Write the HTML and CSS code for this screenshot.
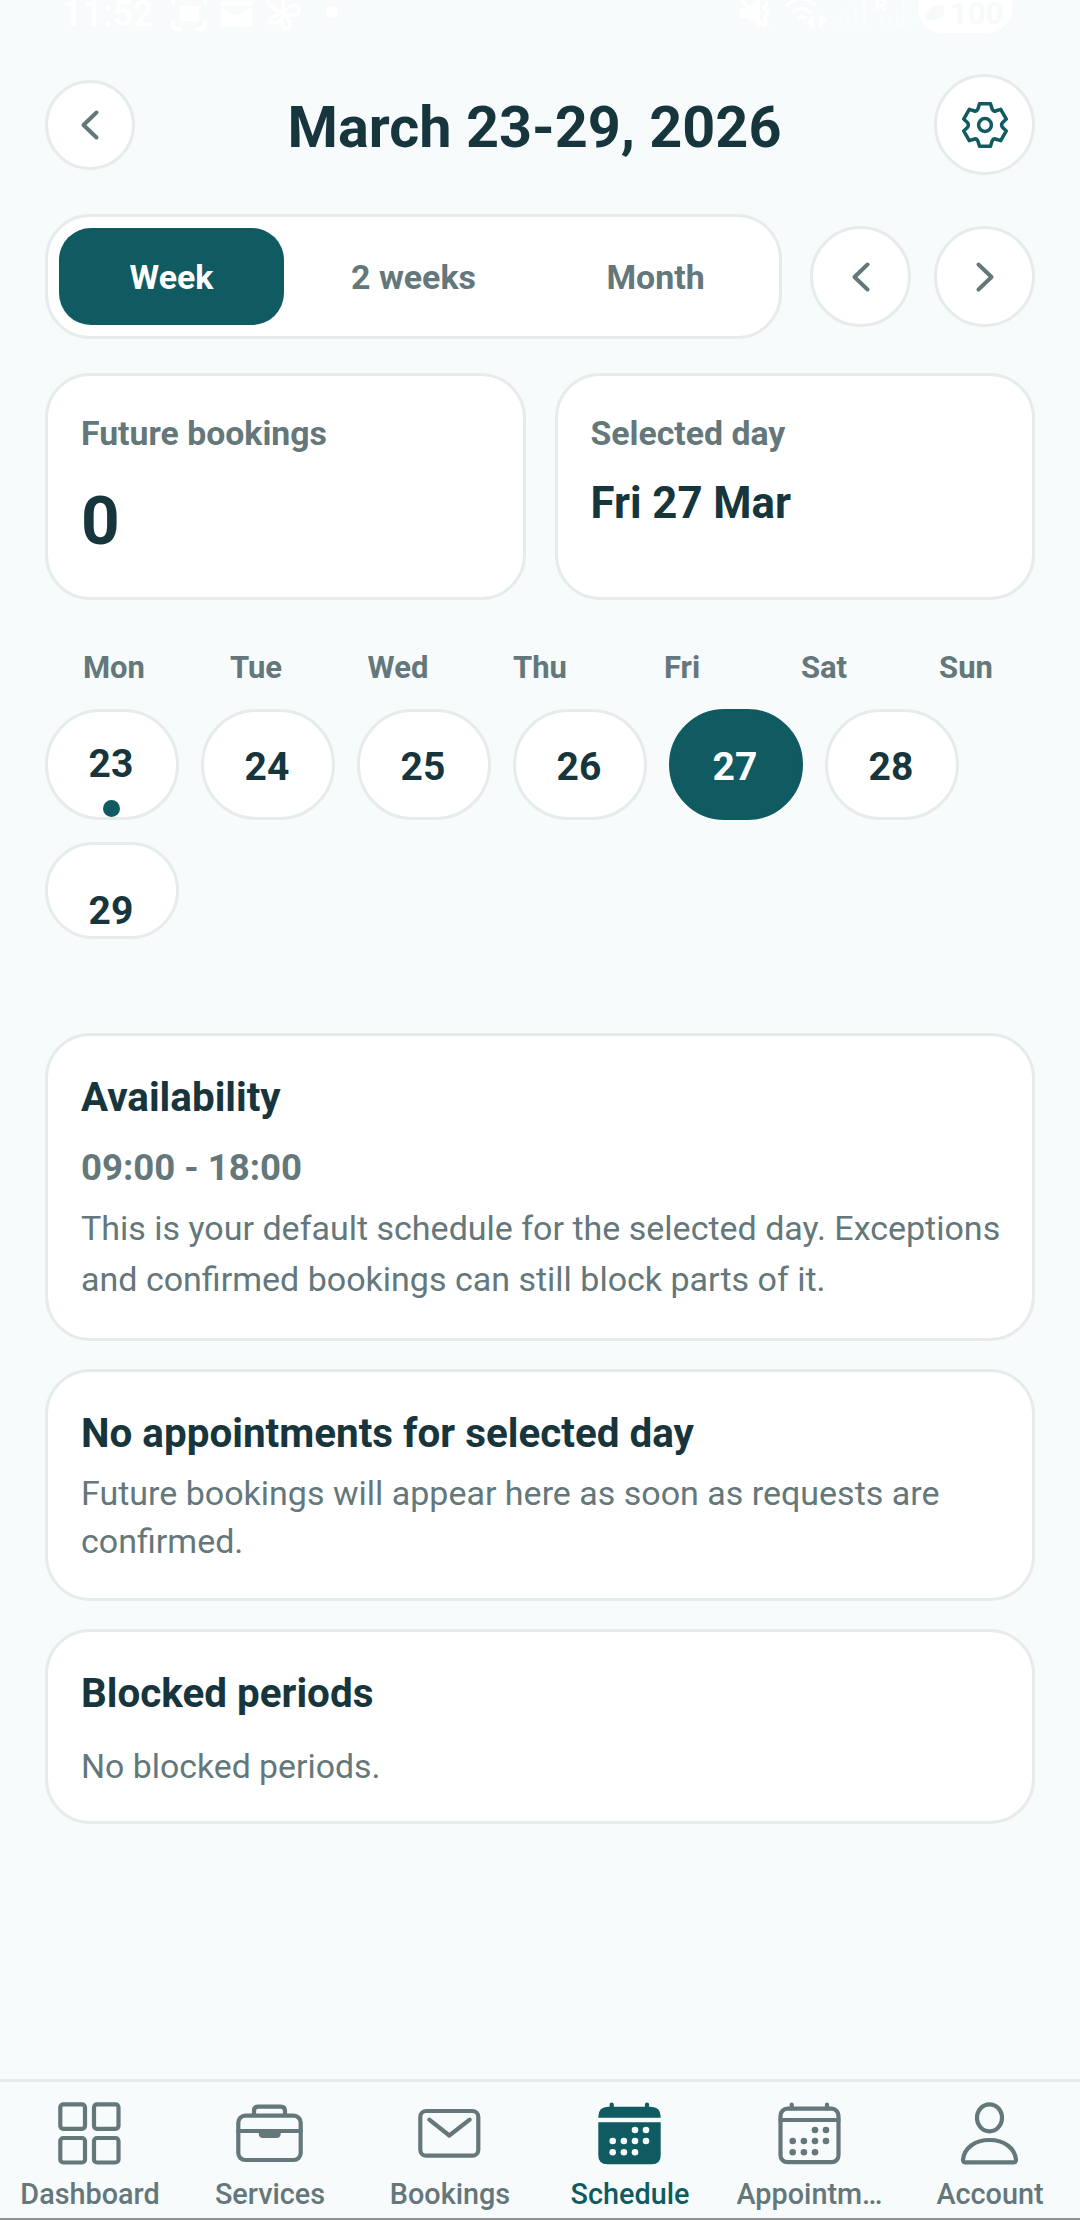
FILE: index.html
```html
<!DOCTYPE html>
<html lang="en">
<head>
    <meta charset="UTF-8">
    <meta name="viewport" content="width=device-width, initial-scale=1.0">
    <title>Schedule</title>
    <link rel="stylesheet" href="styles.css">
</head>
<body>
    <div class="status-bar">
        <span class="status-time">11:52</span>
        <svg class="status-left" width="170" height="34" viewBox="170 0 170 34">
            <g fill="none" stroke="#fff" stroke-width="4" stroke-linecap="round">
                <path d="M173 22v3q0 4 4 4h3M198 29h3q4 0 4-4v-3M173 3V0M205 3V0"/>
            </g>
            <path d="M283 13C270 8 266 3 268-4M283 13C270 16 266 24 272 23C278 24 283 20 283 13C280 24 282 30 288 29C292 26 290 19 283 13C292 18 300 15 299 9C296 3 288 6 283 13V-4" fill="none" stroke="#fff" stroke-width="3"/>
            <path d="M180 6h19v15h-19z" fill="#fff"/>
            <path d="M220 0h33v23q0 4-4 4h-25q-4 0-4-4zM220 6l16 9 17-9" fill="#fff" stroke="#f7fbfc" stroke-width="1.5"/>
            <circle cx="332" cy="12" r="6" fill="#fff"/>
        </svg>
        <svg class="status-right" width="175" height="34" viewBox="738 0 175 34">
            <path d="M740 8h7l13-12v31l-13-9h-7z" fill="#fff"/>
            <g fill="none" stroke="#fff" stroke-width="3" stroke-linecap="round">
                <path d="M740-2l24 28M767 3l-3 5 4 5-4 6 4 6"/>
                <path d="M787 5q15-12 28 0M793 12q9-7 17 0M799 18q3-3 6 0"/>
                <path d="M812 17v9l-3-3M821 26v-9l4 4"/>
            </g>
            <path d="M838 20h4v7h-4zM846 13h4v14h-4zM854 6h4v21h-4zM862 0h4v27h-4z" fill="#fafdfd"/>
            <path d="M880 20h3v7h-3zM888 17h3v10h-3zM896 9h3v18h-3zM902 0h3v27h-3z" fill="#fafdfd"/>
            <path d="M877 10V0h7q3 3-1 5h-5l7 5" fill="none" stroke="#fff" stroke-width="2.5"/>
        </svg>
        <div class="battery">
            <svg width="24" height="22" viewBox="0 0 24 22"><path d="M3 18Q4 3 21 3q2 16-13 14zM3 18L14 9" fill="#f7fafb" stroke="#f7fafb"/></svg>
            100
        </div>
    </div>

    <div class="container">
        <div class="header">
            <button class="circle-button back">
                <svg class="chevron" viewBox="0 0 30 34"><path d="M21.5 4.5L8.5 17l13 12.5"/></svg>
            </button>
            <h1>March 23-29, 2026</h1>
            <button class="circle-button">
                <svg class="gear" viewBox="-24 -24 48 48">
                    <path d="M-5.5-21.3H5.500L7-16.2Q8.400-13.300 10.500-14L15.700-15.600 21.300-5.900 17.400-2.200Q15.800 0 17.400 2.200L21.300 5.900 15.700 15.600 10.500 14Q8.400 13.300 7 16.200L5.500 21.300H-5.500L-7 16.200Q-8.400 13.300-10.500 14L-15.700 15.600-21.300 5.900-17.400 2.200Q-15.800 0-17.400-2.200L-21.300-5.900-15.700-15.600-10.500-14Q-8.400-13.300-7-16.200Z"/>
                    <circle r="6.4"/>
                </svg>
            </button>
        </div>

        <div class="controls">
            <div class="segments">
                <div class="segment active">Week</div>
                <div class="segment">2 weeks</div>
                <div class="segment">Month</div>
            </div>
            <div class="arrows">
                <button class="circle-button">
                    <svg class="chevron" viewBox="0 0 30 34"><path d="M21.5 4.5L8.5 17l13 12.5"/></svg>
                </button>
                <button class="circle-button">
                    <svg class="chevron" viewBox="0 0 30 34"><path d="M8.5 4.5l13 12.5-13 12.5"/></svg>
                </button>
            </div>
        </div>

        <div class="stats">
            <div class="stat-card">
                <div class="stat-label">Future bookings</div>
                <div class="stat-number">0</div>
            </div>
            <div class="stat-card">
                <div class="stat-label">Selected day</div>
                <div class="stat-date">Fri 27 Mar</div>
            </div>
        </div>

        <div class="weekdays">
            <span>Mon</span>
            <span>Tue</span>
            <span>Wed</span>
            <span>Thu</span>
            <span>Fri</span>
            <span>Sat</span>
            <span>Sun</span>
        </div>
        <div class="days">
            <div class="day has-booking">23<span class="dot"></span></div>
            <div class="day">24</div>
            <div class="day">25</div>
            <div class="day">26</div>
            <div class="day selected">27</div>
            <div class="day">28</div>
            <div class="day last">29</div>
        </div>

        <div class="card availability">
            <h2>Availability</h2>
            <p class="hours">09:00 - 18:00</p>
            <p>This is your default schedule for the selected day. Exceptions and confirmed bookings can still block parts of it.</p>
        </div>
        <div class="card appointments">
            <h2>No appointments for selected day</h2>
            <p>Future bookings will appear here as soon as requests are confirmed.</p>
        </div>
        <div class="card blocked">
            <h2>Blocked periods</h2>
            <p>No blocked periods.</p>
        </div>
    </div>

    <div class="tab-bar">
        <div class="tab">
            <svg viewBox="0 0 72 72">
                <rect x="6.3" y="6.3" width="24.7" height="24.5" rx="3"/>
                <rect x="40" y="6.3" width="24.5" height="24.5" rx="3"/>
                <rect x="6.3" y="40" width="24.7" height="24.5" rx="3"/>
                <rect x="40" y="40" width="24.5" height="24.5" rx="3"/>
            </svg>
            <span>Dashboard</span>
        </div>
        <div class="tab">
            <svg viewBox="0 0 72 72">
                <rect x="4.3" y="17.7" width="62.4" height="44.3" rx="7"/>
                <path d="M20 17v-4q0-4.3 4.3-4.3h22.4q4.3 0 4.3 4.3v4M4.3 33h62.4"/>
                <path class="fill" d="M24.7 33h22v2.5q0 4.5-4.5 4.5h-13q-4.500 0-4.500-4.500z"/>
            </svg>
            <span>Services</span>
        </div>
        <div class="tab">
            <svg viewBox="0 0 72 72">
                <rect x="6.3" y="13" width="58" height="44.7" rx="6"/>
                <path d="M15.3 21.7l20 15.8 20.4-15.8"/>
            </svg>
            <span>Bookings</span>
        </div>
        <div class="tab active">
            <svg viewBox="0 0 72 72">
                <path class="fill" d="M4.3 19.7v-1q0-10 10-10h42.4q10 0 10 10v1zM4.3 24.3h62.4v33q0 9-9 9H13.3q-9 0-9-9z"/>
                <path d="M17.7 6.5v5M53 6.5v5"/>
                <g class="holes">
                    <circle cx="41" cy="32" r="3.3"/><circle cx="52" cy="32" r="3.3"/>
                    <circle cx="18.7" cy="43" r="3.3"/><circle cx="29.9" cy="43" r="3.3"/><circle cx="41" cy="43" r="3.3"/><circle cx="52" cy="43" r="3.3"/>
                    <circle cx="18.7" cy="54.2" r="3.3"/><circle cx="29.9" cy="54.2" r="3.3"/><circle cx="41" cy="54.2" r="3.3"/>
                </g>
            </svg>
            <span>Schedule</span>
        </div>
        <div class="tab">
            <svg viewBox="0 0 72 72">
                <rect x="6.5" y="10.7" width="58" height="53.5" rx="7"/>
                <path d="M6.5 22h58M17.7 6.5v4M53 6.5v4"/>
                <g class="fill">
                    <circle cx="41" cy="32" r="3.3"/><circle cx="52" cy="32" r="3.3"/>
                    <circle cx="18.7" cy="43" r="3.3"/><circle cx="29.9" cy="43" r="3.3"/><circle cx="41" cy="43" r="3.3"/><circle cx="52" cy="43" r="3.3"/>
                    <circle cx="18.7" cy="54.2" r="3.3"/><circle cx="29.9" cy="54.2" r="3.3"/><circle cx="41" cy="54.2" r="3.3"/>
                </g>
            </svg>
            <span>Appointments</span>
        </div>
        <div class="tab">
            <svg viewBox="0 0 72 72">
                <ellipse cx="35.5" cy="19.8" rx="12.5" ry="13.5"/>
                <path d="M11 64.3q-2 0-2-2.5C10 50 21 42 35.5 42S61 50 62 61.8q0 2.5-2 2.5z"/>
            </svg>
            <span>Account</span>
        </div>
    </div>
</body>
</html>
```
FILE: styles.css
```css
* {
    box-sizing: border-box;
}

body {
    margin: 0;
    width: 1080px;
    height: 2220px;
    display: flex;
    flex-direction: column;
    overflow: hidden;
    background-color: #f7fbfc;
    color: #17353c;
    font-family: Roboto, sans-serif;
}

h1, h2, p {
    margin: 0;
}

/* Status bar */
.status-bar {
    display: flex;
    align-items: flex-start;
    height: 34px;
    padding: 0 68px 0 62px;
    overflow: hidden;
    color: #fff;
}

.status-time {
    width: 108px;
    font-size: 36px;
    font-weight: 500;
    line-height: 28px;
}

.status-right {
    margin-left: auto;
}

.battery {
    display: flex;
    align-items: center;
    width: 94px;
    height: 55px;
    margin: -22px 0 0 5px;
    padding: 15px 0 0 5px;
    gap: 3px;
    border-radius: 24px;
    background-color: #fff;
    color: #f7fafb;
    font-size: 31px;
    font-weight: 700;
}

.container {
    flex: 1;
    padding: 40px 45px 0;
}

/* Header */
.header {
    display: flex;
    align-items: center;
    height: 101px;
}

h1 {
    flex: 1;
    font-size: 57.6px;
    font-weight: 700;
    line-height: 68px;
    padding-top: 6px;
    text-align: center;
}

.circle-button {
    display: flex;
    justify-content: center;
    align-items: center;
    width: 101px;
    height: 101px;
    padding: 0;
    border: 3px solid #e6ebec;
    border-radius: 50%;
    background-color: #fff;
}

.back {
    width: 90px;
    height: 90px;
}

.chevron {
    width: 30px;
    height: 34px;
    fill: none;
    stroke: #64777a;
    stroke-width: 4;
    stroke-linecap: round;
    stroke-linejoin: round;
}

.gear {
    width: 48px;
    height: 48px;
    fill: none;
    stroke: #0f5b61;
    stroke-width: 3.5;
    stroke-linejoin: round;
}

/* Range switch */
.controls {
    display: flex;
    align-items: center;
    gap: 28px;
    margin-top: 39px;
}

.segments {
    flex: 1;
    display: flex;
    gap: 17px;
    height: 125px;
    padding: 11px;
    border: 3px solid #e6ebec;
    border-radius: 45px;
    background-color: #fff;
}

.segment {
    flex: 1;
    border-radius: 32px;
    color: #64777a;
    font-size: 33.9px;
    font-weight: 700;
    line-height: 99px;
    text-align: center;
}

.segment.active {
    background-color: #0f5b61;
    color: #fff;
}

.arrows {
    display: flex;
    gap: 23px;
}

/* Stats */
.stats {
    display: grid;
    grid-template-columns: 1fr 1fr;
    gap: 29px;
    margin-top: 34px;
}

.stat-card {
    height: 227px;
    padding: 33px;
    border: 3px solid #e6ebec;
    border-radius: 45px;
    background-color: #fff;
}

.stat-label {
    color: #64777a;
    font-size: 33.8px;
    font-weight: 700;
    line-height: 50px;
}

.stat-number {
    margin-top: 22px;
    font-size: 67.5px;
    font-weight: 700;
    line-height: 80px;
}

.stat-date {
    margin-top: 18px;
    font-size: 43.7px;
    font-weight: 700;
    line-height: 52px;
}

/* Calendar */
.weekdays {
    display: grid;
    grid-template-columns: repeat(7, 1fr);
    margin: 50px -2px 0;
    color: #64777a;
    font-size: 31px;
    font-weight: 700;
    line-height: 36px;
    text-align: center;
}

.days {
    display: flex;
    flex-wrap: wrap;
    gap: 22px;
    margin-top: 23px;
}

.day {
    position: relative;
    width: 134px;
    height: 111px;
    border: 3px solid #e6ebec;
    border-radius: 56px;
    background-color: #fff;
    font-size: 39px;
    font-weight: 700;
    line-height: 110px;
    text-align: center;
    padding-right: 2px;
}

.day.has-booking {
    line-height: 104px;
}

.day.selected {
    border-color: #0f5b61;
    background-color: #0f5b61;
    color: #fff;
}

.day.last {
    height: 97px;
    line-height: 132px;
}

.dot {
    position: absolute;
    left: 55px;
    bottom: 0;
    width: 17px;
    height: 17px;
    border-radius: 50%;
    background-color: #0f5b61;
}

/* Cards */
.card {
    margin-top: 28px;
    padding: 33px 28px 33px 33px;
    border: 3px solid #e6ebec;
    border-radius: 45px;
    background-color: #fff;
}

.card h2 {
    font-size: 40.4px;
    font-weight: 700;
    line-height: 58px;
}

.card p {
    color: #64777a;
    font-size: 34px;
    line-height: 51px;
}

.availability {
    margin-top: 94px;
}

.availability .hours {
    margin: 16px 0 10px;
    font-size: 36.6px;
    font-weight: 700;
    line-height: 50px;
}

.appointments p {
    margin-top: 6px;
    line-height: 48px;
}

.blocked p {
    margin-top: 22px;
    font-size: 33.8px;
    line-height: 43px;
}

/* Bottom tabs */
.tab-bar {
    display: flex;
    height: 141px;
    padding-top: 16px;
    border-top: 3px solid #e6ebec;
    border-bottom: 2px solid #8f9395;
}

.tab {
    width: 180px;
    display: flex;
    flex-direction: column;
    align-items: center;
    color: #64777a;
    font-size: 28.8px;
    font-weight: 500;
    line-height: 34px;
}

.tab.active {
    color: #0f5b61;
}

.tab svg {
    width: 72px;
    height: 72px;
    flex: none;
    fill: none;
    stroke: currentColor;
    stroke-width: 4.2;
    stroke-linecap: round;
    stroke-linejoin: round;
}

.tab .fill {
    fill: currentColor;
    stroke: none;
}

.tab .holes {
    fill: #f7fbfc;
    stroke: none;
}

.tab span {
    max-width: 147px;
    margin-top: 7px;
    overflow: hidden;
    text-overflow: ellipsis;
    white-space: nowrap;
}
```
